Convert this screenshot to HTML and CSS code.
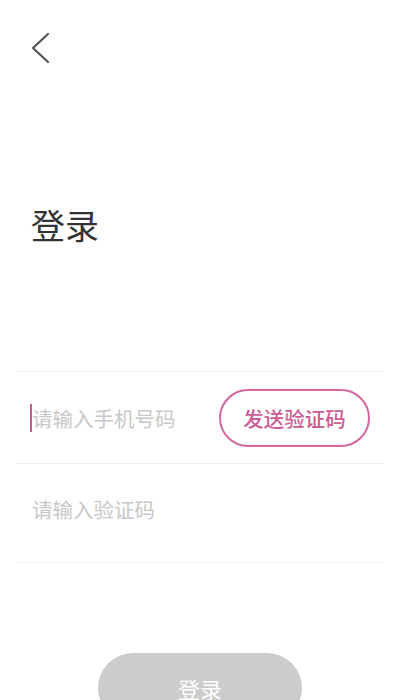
FILE: index.html
```html
<!DOCTYPE html>
<html lang="zh-CN">
<head>
<meta charset="utf-8">
<title>登录</title>
<link rel="stylesheet" href="styles.css">
</head>
<body>
<div class="page">
  <div class="nav">
    <svg class="back" width="20" height="32" viewBox="0 0 20 32" fill="none">
      <path d="M18 2 L3 16 L18 30" stroke="#555555" stroke-width="2.2" stroke-linecap="round" stroke-linejoin="round"/>
    </svg>
  </div>
  <h1 class="title">登录</h1>
  <div class="form">
    <div class="row row-phone">
      <div class="field">
        <span class="caret"></span>
        <span class="placeholder">请输入手机号码</span>
      </div>
      <button class="send">发送验证码</button>
    </div>
    <div class="row row-code">
      <div class="field">
        <span class="placeholder">请输入验证码</span>
      </div>
    </div>
  </div>
  <div class="actions">
    <button class="login">登录</button>
  </div>
</div>
</body>
</html>
```
FILE: styles.css
```css
html, body {
  margin: 0;
  padding: 0;
  background: #ffffff;
  font-family: "Noto Sans CJK SC", "Noto Sans", sans-serif;
}

.page {
  width: 400px;
  height: 700px;
  overflow: hidden;
}

.nav {
  height: 96px;
  padding: 32px 0 0 30px;
  box-sizing: border-box;
}

.back {
  display: block;
}

.title {
  margin: 109px 0 0 31px;
  font-size: 34px;
  line-height: 40px;
  font-weight: 400;
  color: #333333;
}

.form {
  margin: 126px 16px 0;
  border-bottom: 1px solid #eeeeee;
}

.row {
  display: flex;
  align-items: center;
  border-top: 1px solid #eeeeee;
  padding: 0 14px 0 15px;
}

.row-phone {
  height: 91px;
}

.row-code {
  height: 99px;
  padding-bottom: 8px;
  box-sizing: border-box;
}

.field {
  flex: 1;
  display: flex;
  align-items: center;
  position: relative;
}

.placeholder {
  font-size: 20.5px;
  color: #c8c8c8;
  padding-left: 1px;
}

.caret {
  position: absolute;
  left: -1px;
  top: 50%;
  width: 2px;
  height: 28px;
  margin-top: -14px;
  background: #c95a90;
}

.send {
  width: 151px;
  height: 58px;
  border: 2px solid #d4679f;
  border-radius: 29px;
  background: #ffffff;
  color: #cc5b96;
  font-family: inherit;
  font-size: 20.5px;
  font-weight: 500;
  padding: 0;
}

.actions {
  display: flex;
  justify-content: center;
  margin-top: 90px;
}

.login {
  width: 204px;
  height: 70px;
  border: none;
  border-radius: 35px;
  background: #cccccc;
  color: #ffffff;
  font-family: inherit;
  font-size: 22px;
  padding: 0;
}
```
